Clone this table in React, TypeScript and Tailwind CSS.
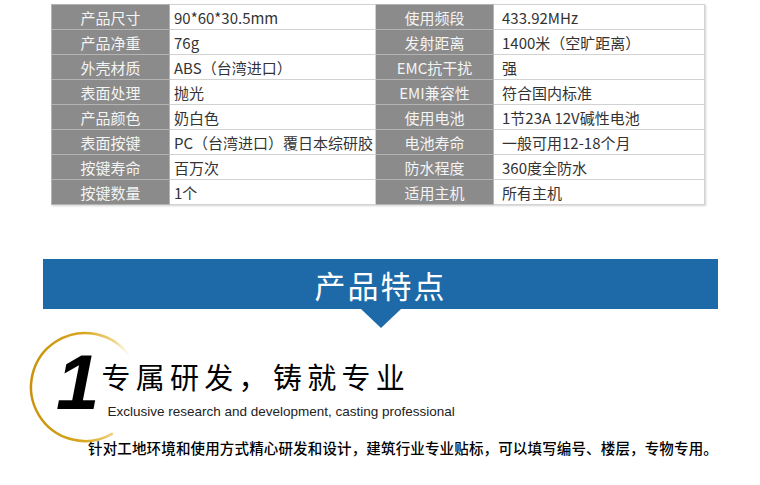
const specs: [string, string, string, string][] = [
  ["产品尺寸", "90*60*30.5mm", "使用频段", "433.92MHz"],
  ["产品净重", "76g", "发射距离", "1400米（空旷距离）"],
  ["外壳材质", "ABS（台湾进口）", "EMC抗干扰", "强"],
  ["表面处理", "抛光", "EMI兼容性", "符合国内标准"],
  ["产品颜色", "奶白色", "使用电池", "1节23A 12V碱性电池"],
  ["表面按键", "PC（台湾进口）覆日本综研胶", "电池寿命", "一般可用12-18个月"],
  ["按键寿命", "百万次", "防水程度", "360度全防水"],
  ["按键数量", "1个", "适用主机", "所有主机"],
];

function SpecTable() {
  return (
    <table className="ml-[51px] w-[653px] table-fixed border-collapse shadow-[1px_1px_2px_rgba(0,0,0,0.18)]">
      <colgroup>
        <col className="w-[118px]" />
        <col className="w-[206px]" />
        <col className="w-[118px]" />
        <col className="w-[211px]" />
      </colgroup>
      <tbody>
        {specs.map(([k1, v1, k2, v2]) => (
          <tr key={k1} className="h-[25px]">
            <td className="border border-[#b4b4b4] bg-[#8b8b8b] p-0 text-center text-[15px] leading-none text-[#f4f4f4]">
              {k1}
            </td>
            <td className="border border-[#d2d2d2] bg-white py-0 pl-[4px] text-[15px] leading-none text-[#333]">
              {v1}
            </td>
            <td className="border border-[#b4b4b4] bg-[#8b8b8b] p-0 text-center text-[15px] leading-none text-[#f4f4f4]">
              {k2}
            </td>
            <td className="border border-[#d2d2d2] bg-white py-0 pl-[8px] text-[15px] leading-none text-[#333]">
              {v2}
            </td>
          </tr>
        ))}
      </tbody>
    </table>
  );
}

function GoldRing() {
  // arc open on the right side, ends fading out
  return (
    <svg className="absolute left-[25px] top-[-35px]" width="120" height="120" viewBox="0 0 120 120">
      <defs>
        <linearGradient id="gold" x1="0" y1="0" x2="1" y2="0">
          <stop offset="0" stopColor="#c8920a" />
          <stop offset="0.55" stopColor="#d9a820" />
          <stop offset="0.85" stopColor="#e8c45a" stopOpacity="0.7" />
          <stop offset="1" stopColor="#f3dc9a" stopOpacity="0" />
        </linearGradient>
      </defs>
      <path
        d="M 105.3 30.6 A 54 54 0 1 0 87 106.8"
        fill="none"
        stroke="url(#gold)"
        strokeWidth="2.5"
        strokeLinecap="round"
      />
    </svg>
  );
}

export default function App() {
  return (
    <div className="relative h-[485px] w-[760px] overflow-hidden bg-white font-['Noto_Sans_CJK_SC',sans-serif]">
      <div className="pt-[4px]">
        <SpecTable />
      </div>

      <div className="relative ml-[43px] mt-[54px] flex h-[50px] w-[675px] items-center justify-center bg-[#1e6aa9]">
        <span className="text-[31px] leading-none tracking-[2px] text-white">产品特点</span>
        <div className="absolute left-[318px] top-[50px] h-0 w-0 border-x-[20px] border-t-[19px] border-x-transparent border-t-[#1e6aa9]" />
      </div>

      <div className="relative mt-[53px] flex items-start">
        <GoldRing />
        <span className="ml-[56px] mt-[-19px] font-['Liberation_Sans',sans-serif] text-[78px] font-bold italic leading-none text-black">
          1
        </span>
        <div className="ml-[2px] flex flex-col">
          <span className="text-[29px] leading-none tracking-[5.3px] text-black">专属研发，铸就专业</span>
          <span className="ml-[6px] mt-[14px] font-['Liberation_Sans',sans-serif] text-[13.5px] leading-none text-[#222]">
            Exclusive research and development, casting professional
          </span>
        </div>
      </div>

      <p className="ml-[88px] mt-[20px] text-[14.5px] font-medium leading-none tracking-[0.15px] text-black">
        针对工地环境和使用方式精心研发和设计，建筑行业专业贴标，可以填写编号、楼层，专物专用。
      </p>
    </div>
  );
}
